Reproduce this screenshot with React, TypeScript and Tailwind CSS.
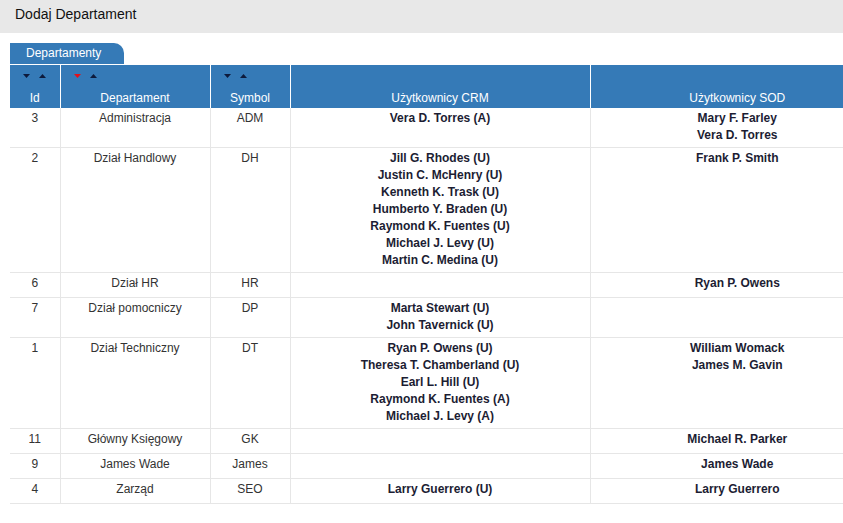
import React from 'react';

type Dept = {
  id: number;
  name: string;
  symbol: string;
  crm: string[];
  sod: string[];
};

const departments: Dept[] = [
  { id: 3, name: 'Administracja', symbol: 'ADM', crm: ['Vera D. Torres (A)'], sod: ['Mary F. Farley', 'Vera D. Torres'] },
  {
    id: 2,
    name: 'Dział Handlowy',
    symbol: 'DH',
    crm: [
      'Jill G. Rhodes (U)',
      'Justin C. McHenry (U)',
      'Kenneth K. Trask (U)',
      'Humberto Y. Braden (U)',
      'Raymond K. Fuentes (U)',
      'Michael J. Levy (U)',
      'Martin C. Medina (U)',
    ],
    sod: ['Frank P. Smith'],
  },
  { id: 6, name: 'Dział HR', symbol: 'HR', crm: [], sod: ['Ryan P. Owens'] },
  { id: 7, name: 'Dział pomocniczy', symbol: 'DP', crm: ['Marta Stewart (U)', 'John Tavernick (U)'], sod: [] },
  {
    id: 1,
    name: 'Dział Techniczny',
    symbol: 'DT',
    crm: [
      'Ryan P. Owens (U)',
      'Theresa T. Chamberland (U)',
      'Earl L. Hill (U)',
      'Raymond K. Fuentes (A)',
      'Michael J. Levy (A)',
    ],
    sod: ['William Womack', 'James M. Gavin'],
  },
  { id: 11, name: 'Główny Księgowy', symbol: 'GK', crm: [], sod: ['Michael R. Parker'] },
  { id: 9, name: 'James Wade', symbol: 'James', crm: [], sod: ['James Wade'] },
  { id: 4, name: 'Zarząd', symbol: 'SEO', crm: ['Larry Guerrero (U)'], sod: ['Larry Guerrero'] },
];

function Arrow({ dir, active }: { dir: 'down' | 'up'; active?: boolean }) {
  return (
    <svg width="7" height="4" viewBox="0 0 7 4" className="block">
      <polygon
        points={dir === 'down' ? '0,0 7,0 3.5,4' : '0,4 7,4 3.5,0'}
        fill={active ? '#e3101a' : '#0d1a3c'}
      />
    </svg>
  );
}

function SortArrows({ activeDown }: { activeDown?: boolean }) {
  return (
    <div className="flex gap-[9px] pl-[13px] mb-[13px]">
      <Arrow dir="down" active={activeDown} />
      <Arrow dir="up" />
    </div>
  );
}

function HeadCell({ label, sortable, activeDown, last }: { label: string; sortable?: boolean; activeDown?: boolean; last?: boolean }) {
  return (
    <th
      className={`h-[43px] p-0 pb-[3px] align-bottom font-normal text-white text-[12px] leading-[14px] ${
        last ? '' : 'border-r border-white'
      }`}
    >
      {sortable && <SortArrows activeDown={activeDown} />}
      <div className="text-center">{label}</div>
    </th>
  );
}

function Names({ items }: { items: string[] }) {
  return (
    <>
      {items.map((n, i) => (
        <div key={i} className="font-bold leading-[17px] text-[#1c1d33]">
          {n}
        </div>
      ))}
    </>
  );
}

export default function App() {
  const cell = 'align-top text-center px-1 pt-[2px] pb-[3px] leading-[17px] border-r border-[#e6e6e6]';
  return (
    <div className="w-[843px] h-[523px] overflow-hidden bg-white" style={{ fontFamily: '"Liberation Sans", Arial, sans-serif' }}>
      <div className="h-[33px] bg-[#e8e8e8] flex items-center pl-[15px] pb-[4px] text-[14px] text-[#111]">
        Dodaj Departament
      </div>

      <div className="pl-[10px] pt-[10px]">
        <div className="w-[114px] h-[21px] bg-[#357ab7] rounded-tr-[10px] text-white text-[12px] leading-[21px] pl-[16px]">
          Departamenty
        </div>

        <table className="mt-[1px] w-[874px] table-fixed border-collapse text-[12px] text-[#333]">
          <colgroup>
            <col className="w-[50px]" />
            <col className="w-[150px]" />
            <col className="w-[80px]" />
            <col className="w-[300px]" />
            <col className="w-[294px]" />
          </colgroup>
          <thead>
            <tr className="bg-[#357ab7]">
              <HeadCell label="Id" sortable />
              <HeadCell label="Departament" sortable activeDown />
              <HeadCell label="Symbol" sortable />
              <HeadCell label="Użytkownicy CRM" />
              <HeadCell label="Użytkownicy SOD" last />
            </tr>
          </thead>
          <tbody>
            {departments.map((d) => (
              <tr key={d.id} className="h-[25px] border-b border-[#e6e6e6]">
                <td className={cell}>{d.id}</td>
                <td className={cell}>{d.name}</td>
                <td className={cell}>{d.symbol}</td>
                <td className={cell}>
                  <Names items={d.crm} />
                </td>
                <td className={`${cell} border-r-0`}>
                  <Names items={d.sod} />
                </td>
              </tr>
            ))}
          </tbody>
        </table>
      </div>
    </div>
  );
}
